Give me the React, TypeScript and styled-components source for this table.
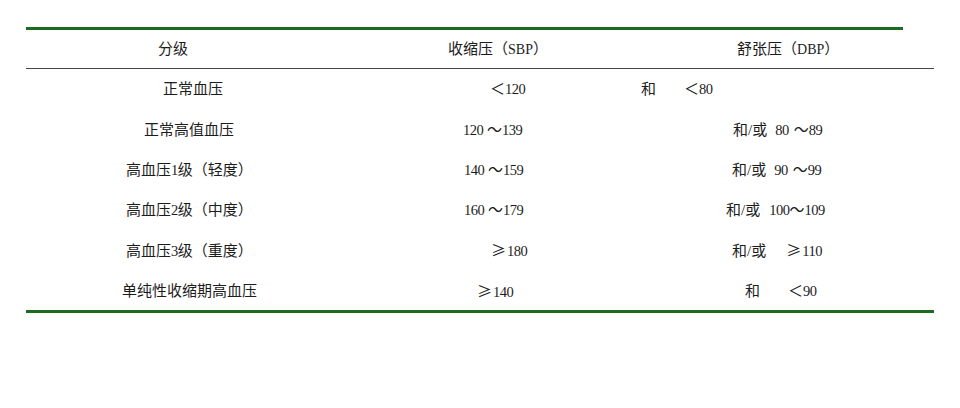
import styled, { createGlobalStyle } from "styled-components";

const Global = createGlobalStyle`
  html, body {
    margin: 0;
    padding: 0;
    background: #ffffff;
  }
  body {
    font-family: "Liberation Serif", "Noto Sans CJK SC", serif;
    color: #1c1c1c;
  }
`;

type Part = [string, number];
type Cell = { x: number; parts: Part[] };
type Row = { grade: Cell; sbp: Cell; dbp: Cell };

const header: Row = {
  grade: { x: 132, parts: [["分级", 0]] },
  sbp: { x: 118, parts: [["收缩压（SBP）", 0]] },
  dbp: { x: 127, parts: [["舒张压（DBP）", 0]] },
};

const rows: Row[] = [
  {
    grade: { x: 137, parts: [["正常血压", 0]] },
    sbp: { x: 160, parts: [["＜120", 0]] },
    dbp: { x: 31, parts: [["和", 0], ["＜80", 28]] },
  },
  {
    grade: { x: 118, parts: [["正常高值血压", 0]] },
    sbp: { x: 133, parts: [["120 ～139", 0]] },
    dbp: { x: 123, parts: [["和/或", 0], ["80", 8], ["～89", 5]] },
  },
  {
    grade: { x: 100, parts: [["高血压1级（轻度）", 0]] },
    sbp: { x: 134, parts: [["140 ～159", 0]] },
    dbp: { x: 122, parts: [["和/或", 0], ["90", 8], ["～99", 5]] },
  },
  {
    grade: { x: 100, parts: [["高血压2级（中度）", 0]] },
    sbp: { x: 134, parts: [["160 ～179", 0]] },
    dbp: { x: 116, parts: [["和/或", 0], ["100～109", 9]] },
  },
  {
    grade: { x: 100, parts: [["高血压3级（重度）", 0]] },
    sbp: { x: 161, parts: [["≥180", 0]] },
    dbp: { x: 122, parts: [["和/或", 0], ["≥110", 20]] },
  },
  {
    grade: { x: 96, parts: [["单纯性收缩期高血压", 0]] },
    sbp: { x: 147, parts: [["≥140", 0]] },
    dbp: { x: 135, parts: [["和", 0], ["＜90", 28]] },
  },
];

const Page = styled.div`
  padding-top: 27px;
  width: 960px;
  height: 408px;
  box-sizing: border-box;
`;

const TopRule = styled.div`
  width: 877px;
  height: 3px;
  margin-left: 26px;
  background: #1d6b1f;
`;

const Table = styled.div`
  width: 908px;
  margin-left: 26px;
  display: flex;
  flex-direction: column;
`;

const GridRow = styled.div<{ $h: number }>`
  display: grid;
  grid-template-columns: 304px 280px 324px;
  height: ${({ $h }) => $h}px;
  align-items: center;
`;

const Divider = styled.div`
  height: 1px;
  background: #3c4d3c;
`;

const BottomRule = styled.div`
  height: 3px;
  margin-top: -1px;
  background: #1d6b1f;
`;

const CellBox = styled.div<{ $x: number }>`
  padding-left: ${({ $x }) => $x}px;
  display: flex;
  align-items: center;
  white-space: pre;
  font-size: 15px;
  line-height: 18px;
`;

const Piece = styled.span<{ $gap: number }>`
  margin-left: ${({ $gap }) => $gap}px;
`;

const Num = styled.span`
  font-family: "Liberation Serif", serif;
  font-size: 14.5px;
  letter-spacing: -0.5px;
`;

const Latin = styled.span`
  font-family: "Liberation Serif", serif;
  font-size: 14px;
`;

const Sym = styled.span`
  font-family: "Noto Sans CJK SC", sans-serif;
  font-size: 15px;
  margin-right: 1px;
`;

const renderText = (t: string) =>
  t.split(/(\d+|[A-Z]+|≥)/).map((seg, i) => {
    if (/^\d+$/.test(seg)) return <Num key={i}>{seg}</Num>;
    if (/^[A-Z]+$/.test(seg)) return <Latin key={i}>{seg}</Latin>;
    if (seg === "≥") return <Sym key={i}>{seg}</Sym>;
    return <span key={i}>{seg}</span>;
  });

const CellView = ({ cell }: { cell: Cell }) => (
  <CellBox $x={cell.x}>
    {cell.parts.map(([t, gap], i) => (
      <Piece key={i} $gap={gap}>
        {renderText(t)}
      </Piece>
    ))}
  </CellBox>
);

export default function App() {
  return (
    <>
      <Global />
      <Page>
        <TopRule />
        <Table>
          <GridRow $h={38}>
            <CellView cell={header.grade} />
            <CellView cell={header.sbp} />
            <CellView cell={header.dbp} />
          </GridRow>
          <Divider />
          {rows.map((r, i) => (
            <GridRow key={i} $h={40.4}>
              <CellView cell={r.grade} />
              <CellView cell={r.sbp} />
              <CellView cell={r.dbp} />
            </GridRow>
          ))}
          <BottomRule />
        </Table>
      </Page>
    </>
  );
}
